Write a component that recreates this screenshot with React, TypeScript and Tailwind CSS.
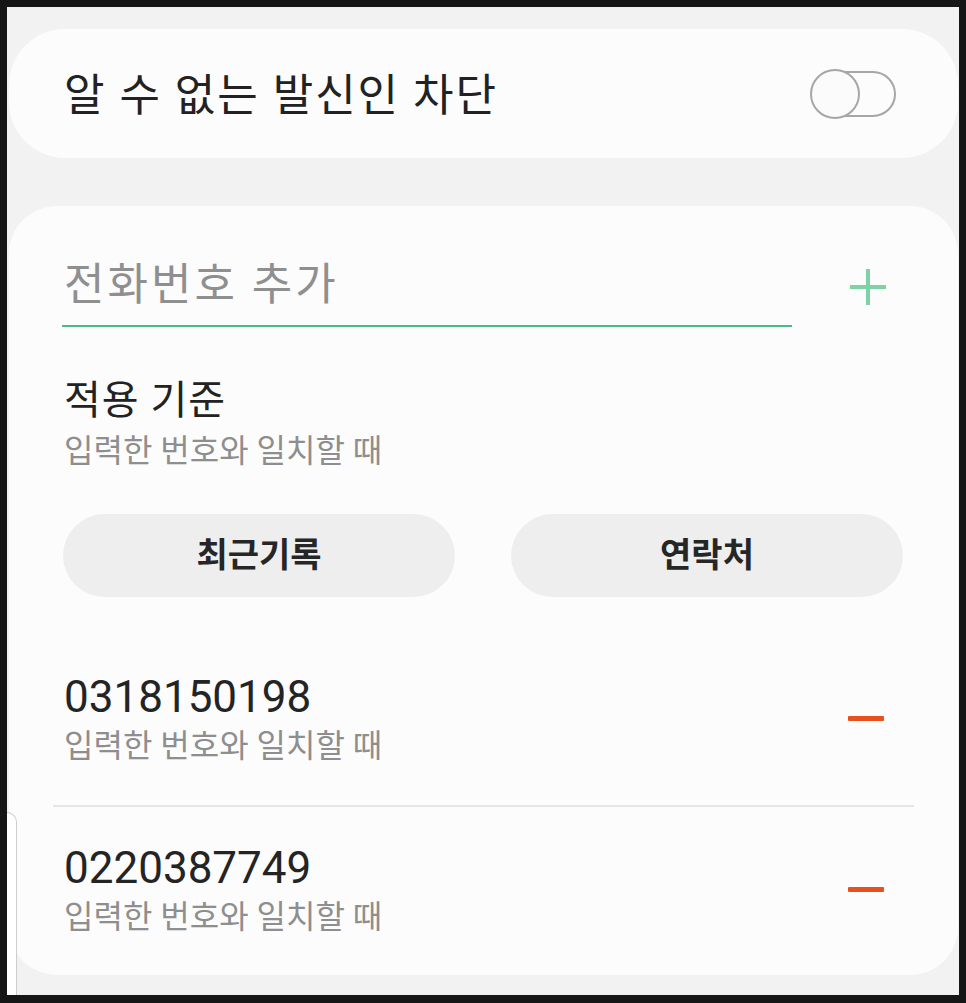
import React from "react";

const ko = { fontFamily: "Roboto, 'Noto Sans CJK KR', sans-serif" };

function Row({ num, className }: { num: string; className: string }) {
  return (
    <div className={"flex items-center pl-[55px] pr-[74px] " + className}>
      <div className="flex-1">
        <div className="text-[44px] leading-[50px] text-[#242424]">{num}</div>
        <div className="text-[32px] leading-[36px] text-[#8e8e8e] mt-[6px]">입력한 번호와 일치할 때</div>
      </div>
      <div className="w-[36px] h-[5px] bg-[#e8501e] rounded-[1px]" />
    </div>
  );
}

export default function App() {
  return (
    <div className="w-[966px] h-[1003px] bg-[#161616] pt-[7px] pl-[7px] pr-[7px] pb-[8px]" style={ko}>
      <div className="relative w-full h-full bg-[#f2f2f2] pt-[22px] pl-[2px] pr-[1px] overflow-hidden">
        <div className="h-[129px] bg-[#fcfcfc] rounded-[56px] flex items-center pl-[55px] pr-[62px]">
          <div className="flex-1 text-[44px] tracking-[2px] text-[#222] leading-none pt-[4px]">알 수 없는 발신인 차단</div>
          <div className="relative w-[86px] h-[50px]">
            <div className="absolute left-[2px] right-0 top-[2px] bottom-[2px] rounded-full border-[2.5px] border-[#a6a6a6]" />
            <div className="absolute left-0 top-0 w-[50px] h-[50px] rounded-full border-[2.5px] border-[#a6a6a6] bg-[#fbfbfb]" />
          </div>
        </div>

        <div className="mt-[48px] h-[769px] bg-[#fcfcfc] rounded-[48px] pt-[50px]">
          <div className="flex items-start pl-[53px] pr-[72px]">
            <div className="w-[730px] border-b-[2px] border-[#4cb98c] h-[71px] pl-[2px]">
              <div className="text-[44px] tracking-[3px] leading-[58px] text-[#8f8f8f]">전화번호 추가</div>
            </div>
            <div className="flex-1 flex justify-end pt-[13px]">
              <div className="relative w-[36px] h-[36px]">
                <div className="absolute left-0 right-0 top-[16px] h-[4px] bg-[#7ed3a5]" />
                <div className="absolute top-0 bottom-0 left-[16px] w-[4px] bg-[#7ed3a5]" />
              </div>
            </div>
          </div>

          <div className="pl-[55px] mt-[52px]">
            <div className="text-[40px] tracking-[1px] leading-[44px] text-[#222]">적용 기준</div>
            <div className="text-[32px] leading-[36px] text-[#8e8e8e] mt-[10px]">입력한 번호와 일치할 때</div>
          </div>

          <div className="flex gap-[56px] pl-[54px] pr-[55px] mt-[45px]">
            <div className="flex-1 h-[83px] rounded-full bg-[#eeeeee] flex items-center justify-center text-[34px] font-bold text-[#262626]">최근기록</div>
            <div className="flex-1 h-[83px] rounded-full bg-[#eeeeee] flex items-center justify-center text-[34px] font-bold text-[#262626]">연락처</div>
          </div>

          <div className="mt-[75px]">
            <Row num="0318150198" className="pb-[41px]" />
            <div className="ml-[44px] mr-[44px] h-[2px] bg-[#e6e6e6]" />
            <Row num="0220387749" className="pt-[36px]" />
          </div>
        </div>

        <div className="absolute left-0 top-[805px] bottom-0 w-[10px] bg-white border-t border-r border-[#cdcdcd] rounded-tr-[10px]" />
      </div>
    </div>
  );
}
